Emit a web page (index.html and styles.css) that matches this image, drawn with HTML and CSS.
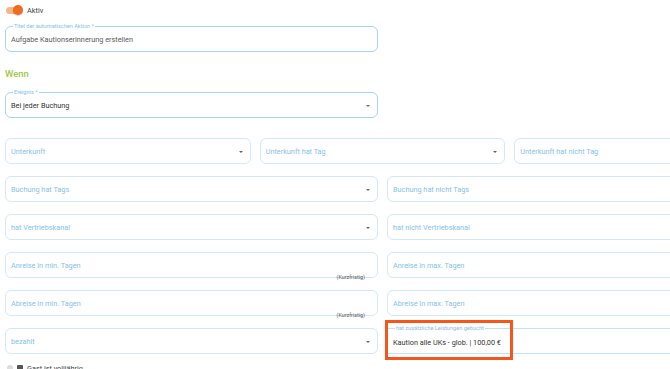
FILE: index.html
```html
<!DOCTYPE html>
<html lang="de">
<head>
    <meta charset="UTF-8">
    <meta name="viewport" content="width=device-width, initial-scale=1.0">
    <title>Automatische Aktion</title>
    <link rel="stylesheet" href="styles.css">
</head>
<body>
    <div class="page">
        <div class="switch-row">
            <span class="switch"><span class="switch-thumb"></span></span>
            <span class="switch-label">Aktiv</span>
        </div>

        <div class="field half filled strong">
            <span class="legend">Titel der automatischen Aktion *</span>
            <span class="value muted">Aufgabe Kautionserinnerung erstellen</span>
        </div>

        <h2 class="section">Wenn</h2>

        <div class="field half filled strong">
            <span class="legend">Ereignis *</span>
            <span class="value">Bei jeder Buchung</span>
            <span class="arrow"></span>
        </div>

        <div class="rows">
            <div class="grid three">
                <div class="field"><span class="placeholder">Unterkunft</span><span class="arrow"></span></div>
                <div class="field"><span class="placeholder">Unterkunft hat Tag</span><span class="arrow"></span></div>
                <div class="field"><span class="placeholder">Unterkunft hat nicht Tag</span></div>
            </div>
            <div class="grid two">
                <div class="field"><span class="placeholder">Buchung hat Tags</span><span class="arrow"></span></div>
                <div class="field"><span class="placeholder">Buchung hat nicht Tags</span></div>
            </div>
            <div class="grid two">
                <div class="field"><span class="placeholder">hat Vertriebskanal</span><span class="arrow"></span></div>
                <div class="field"><span class="placeholder">hat nicht Vertriebskanal</span></div>
            </div>
            <div class="grid two">
                <div class="field"><span class="placeholder">Anreise in min. Tagen</span><span class="hint">(Kurzfristig)</span></div>
                <div class="field"><span class="placeholder">Anreise in max. Tagen</span></div>
            </div>
            <div class="grid two">
                <div class="field"><span class="placeholder">Abreise in min. Tagen</span><span class="hint">(Kurzfristig)</span></div>
                <div class="field"><span class="placeholder">Abreise in max. Tagen</span></div>
            </div>
            <div class="grid two">
                <div class="field"><span class="placeholder">bezahlt</span><span class="arrow"></span></div>
                <div class="field filled open">
                    <span class="legend">hat zusätzliche Leistungen gebucht</span>
                    <span class="value low">Kaution alle UKs - glob. | 100,00 €</span>
                    <span class="highlight"></span>
                </div>
            </div>
        </div>

        <div class="check-row">
            <span class="mini-switch"></span>
            <span class="check-box"></span>
            <span class="check-label">Gast ist volljährig</span>
        </div>
    </div>
</body>
</html>
```

FILE: styles.css
```css
* {
    margin: 0;
    padding: 0;
    box-sizing: border-box;
}

html, body {
    overflow: hidden;
}

body {
    font-family: Roboto, "Liberation Sans", sans-serif;
    background: #fff;
    color: #333;
    height: 369px;
}

.page {
    width: 760px;
    padding: 4px 0 0 5px;
}

/* Schalter oben */
.switch-row {
    display: flex;
    align-items: center;
    height: 12px;
    gap: 5px;
    padding-left: 1px;
}

.switch {
    position: relative;
    width: 16px;
    height: 7px;
    border-radius: 4px;
    background: #f8b48c;
}

.switch-thumb {
    position: absolute;
    right: -1px;
    top: -1.5px;
    width: 10px;
    height: 10px;
    border-radius: 50%;
    background: #f26b1d;
    box-shadow: 0 1px 1px rgba(0, 0, 0, 0.2);
}

.switch-label {
    font-size: 7.4px;
    color: #444;
}

/* Felder */
.field {
    position: relative;
    height: 26px;
    border: 1px solid #d3e8f7;
    border-radius: 6px;
    display: flex;
    align-items: center;
    padding: 0 10px 0 5px;
    font-size: 7.3px;
}

.field.strong {
    border-color: #a9d3f1;
}

.half {
    width: 373px;
    margin-top: 10px;
}

.placeholder {
    color: #86c1ea;
}

.value {
    color: #333;
}

.value.muted {
    color: #5a5a5a;
}

.value.low {
    padding-top: 3px;
}

.legend {
    position: absolute;
    left: 7px;
    top: -4px;
    padding: 0 1px;
    background: #fff;
    font-size: 5.6px;
    line-height: 7px;
    color: #86c1ea;
}

.arrow {
    position: absolute;
    right: 7px;
    top: 12px;
    border-left: 2.5px solid transparent;
    border-right: 2.5px solid transparent;
    border-top: 2.5px solid #666;
}

.hint {
    position: absolute;
    right: 12px;
    bottom: -3px;
    font-size: 5.4px;
    color: #555;
}

.field.open {
    border-left-color: transparent;
    border-radius: 0 6px 6px 0;
    border-color: #c3e1f6;
}

.highlight {
    position: absolute;
    left: -3px;
    top: -9px;
    width: 128px;
    height: 40px;
    border: 3px solid #f4561c;
}

.section {
    margin-top: 16px;
    height: 12px;
    line-height: 12px;
    font-size: 9.5px;
    font-weight: 500;
    color: #a4c64a;
}

.section + .field {
    margin-top: 12px;
}

.rows {
    margin-top: 20px;
    display: flex;
    flex-direction: column;
    gap: 12px;
    width: 755px;
}

.grid {
    display: grid;
    gap: 9px;
}

.grid.three {
    grid-template-columns: repeat(3, 1fr);
}

.grid.two {
    grid-template-columns: repeat(2, 1fr);
}

/* untere Zeile, abgeschnitten */
.check-row {
    margin-top: 9px;
    display: flex;
    align-items: center;
    gap: 4px;
    padding-left: 2px;
    height: 10px;
}

.mini-switch {
    width: 6px;
    height: 6px;
    border-radius: 3px;
    background: #ddd;
}

.check-box {
    width: 6px;
    height: 6px;
    background: #555;
    border-radius: 1px;
}

.check-label {
    font-size: 7.3px;
    color: #444;
}
```
